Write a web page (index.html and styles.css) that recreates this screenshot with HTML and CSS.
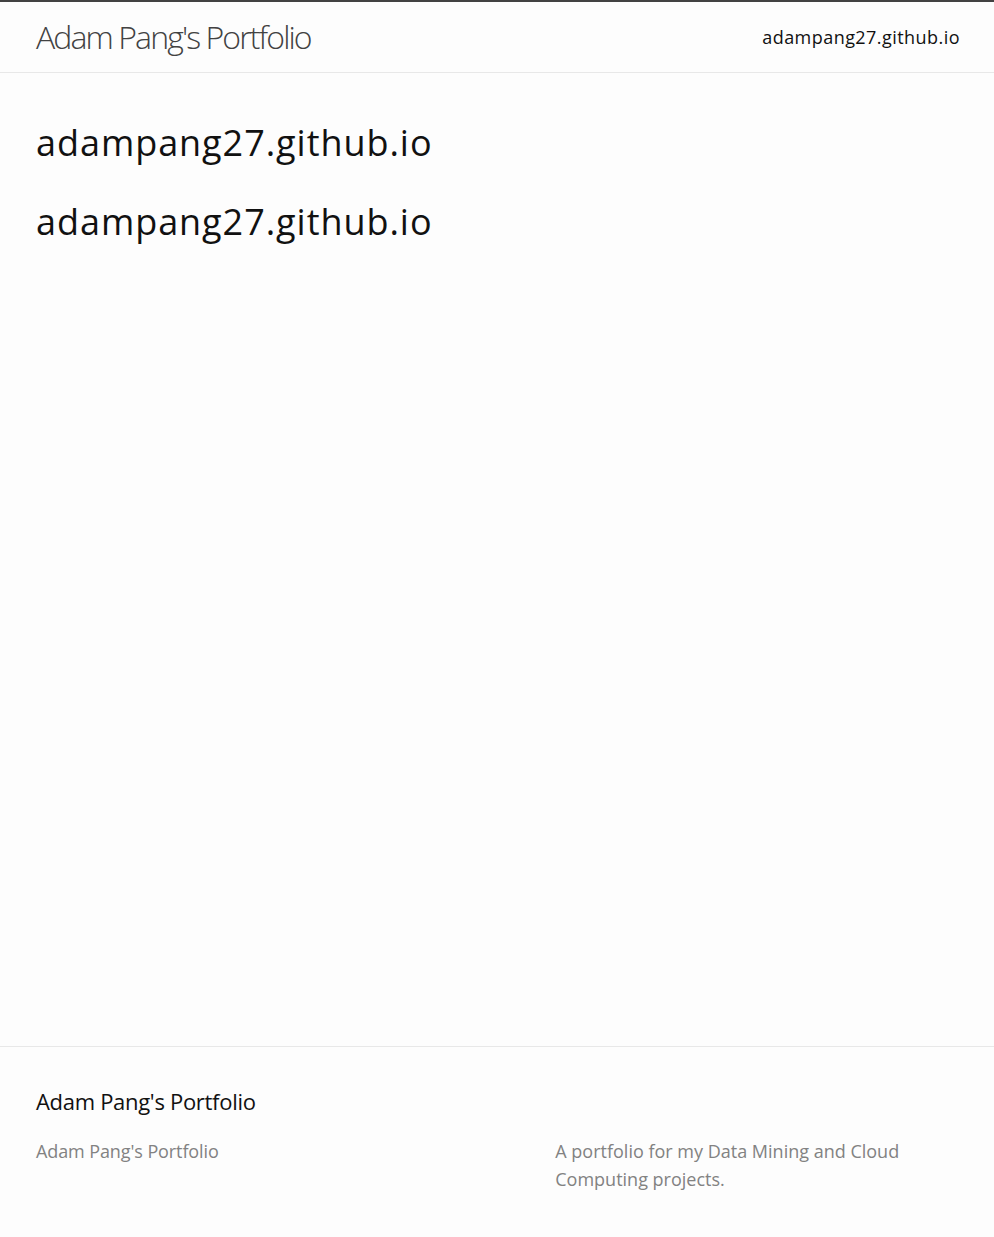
FILE: index.html
```html
<!DOCTYPE html>
<html lang="en">
<head>
<meta charset="utf-8">
<title>Adam Pang's Portfolio</title>
<link rel="stylesheet" href="styles.css">
</head>
<body>
<div class="page">
  <header class="site-header">
    <div class="wrapper header-row">
      <a class="site-title" href="#">Adam Pang's Portfolio</a>
      <nav class="site-nav"><a class="page-link" href="#">adampang27.github.io</a></nav>
    </div>
  </header>
  <main class="page-content">
    <div class="wrapper">
      <h1 class="big">adampang27.github.io</h1>
      <h1 class="big">adampang27.github.io</h1>
    </div>
  </main>
  <footer class="site-footer">
    <div class="wrapper">
      <h2 class="footer-heading">Adam Pang's Portfolio</h2>
      <div class="footer-cols">
        <div class="footer-col">Adam Pang's Portfolio</div>
        <div class="footer-col desc">A portfolio for my Data Mining and Cloud Computing projects.</div>
      </div>
    </div>
  </footer>
</div>
</body>
</html>
```
FILE: styles.css
```css
html, body {
  margin: 0;
  padding: 0;
}
body {
  background: #fdfdfd;
  color: #111111;
  font-family: "Open Sans", "Noto Sans", sans-serif;
}
a {
  color: inherit;
  text-decoration: none;
}
.page {
  min-height: 100vh;
  display: flex;
  flex-direction: column;
}
.wrapper {
  padding: 0 34px 0 36px;
}
.site-header {
  border-top: 2px solid #424242;
  border-bottom: 1px solid #e8e8e8;
}
.header-row {
  height: 70px;
  display: flex;
  align-items: center;
  justify-content: space-between;
}
.site-title {
  font-size: 32px;
  font-weight: 300;
  letter-spacing: -1.9px;
  color: #424242;
  line-height: 70px;
}
.page-link {
  font-size: 18px;
  letter-spacing: 0.45px;
  color: #111111;
  line-height: 70px;
}
.page-content {
  flex: 1;
  padding-top: 48px;
}
.big {
  font-size: 36px;
  font-weight: 400;
  line-height: 43px;
  letter-spacing: 0.95px;
  margin: 0 0 36px;
}
.site-footer {
  border-top: 1px solid #e8e8e8;
  padding: 38px 0 44px;
}
.footer-heading {
  font-size: 22px;
  font-weight: 400;
  line-height: 33px;
  letter-spacing: -0.3px;
  margin: 0 0 19px;
}
.footer-cols {
  display: grid;
  grid-template-columns: 56.2% 1fr;
  color: #828282;
  font-size: 18px;
  line-height: 28px;
}
.footer-col {
  letter-spacing: -0.1px;
}
.desc {
  max-width: 380px;
  letter-spacing: 0;
}
```
